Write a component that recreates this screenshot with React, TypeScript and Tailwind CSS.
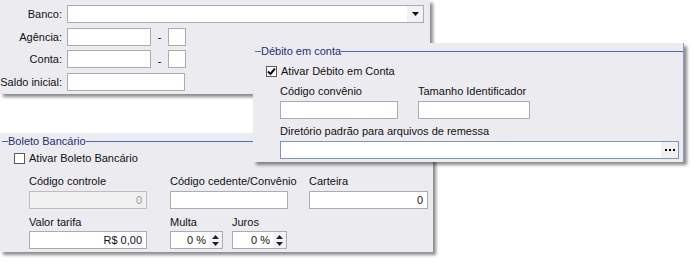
import React from 'react'

const font = "font-['Liberation_Sans',Arial,sans-serif]"

const Field = ({ className = '', value = '', disabled = false }: { className?: string; value?: string; disabled?: boolean }) => (
  <div
    className={`h-[18px] border flex items-center justify-end pr-[4px] text-[11px] ${
      disabled ? 'bg-[#f0f0f0] border-[#bdbdbd] text-[#9a9a9a]' : 'bg-white border-[#a9acb3] text-[#111]'
    } ${className}`}
  >
    {value}
  </div>
)

const Spin = ({ className = '' }: { className?: string }) => (
  <div className={`h-[18px] border border-[#a9acb3] bg-white flex items-center ${className}`}>
    <span className="flex-1 text-right pr-[3px] text-[11px] text-[#111]">0 %</span>
    <div className="w-[13px] h-full flex flex-col items-center justify-center gap-[3px] bg-[#f3f3f5]">
      <svg width="7" height="4" viewBox="0 0 7 4"><path d="M3.5 0L7 4H0z" fill="#222" /></svg>
      <svg width="7" height="4" viewBox="0 0 7 4"><path d="M0 0h7L3.5 4z" fill="#222" /></svg>
    </div>
  </div>
)

const Check = ({ checked }: { checked?: boolean }) => (
  <span className="w-[11px] h-[11px] border border-[#5a5a5a] bg-white flex items-center justify-center shrink-0">
    {checked && (
      <svg width="9" height="9" viewBox="0 0 9 9">
        <path d="M1 4.5L3.5 7L8 1.5" stroke="#111" strokeWidth="2" fill="none" />
      </svg>
    )}
  </span>
)

const Legend = ({ title }: { title: string }) => (
  <div className="flex items-center h-[14px] pl-[2px]">
    <div className="w-[6px] h-px bg-[#4d68ae]" />
    <span className="text-[11px] text-[#1d2f78] leading-none">{title}</span>
    <div className="flex-1 h-px bg-[#4d68ae]" />
  </div>
)

const Row = ({ label, children }: { label: string; children: React.ReactNode }) => (
  <div className="flex items-center h-[18px]">
    <span className="w-[62px] text-right text-[11px] text-[#111] whitespace-nowrap">{label}</span>
    <div className="ml-[5px] flex items-center">{children}</div>
  </div>
)

const App = () => {
  return (
    <div className={`relative w-[693px] h-[262px] bg-white overflow-hidden ${font}`}>
      {/* janela conta */}
      <div className="absolute left-0 top-0 w-[430px] h-[94px] bg-[#ecebf0] shadow-[3px_3px_3px_rgba(0,0,0,0.45)] pt-[5px] flex flex-col">
        <Row label="Banco:">
          <div className="w-[357px] h-[18px] border border-[#a9acb3] bg-white flex justify-end">
            <div className="w-[16px] h-full bg-[#f2f2f4] flex items-center justify-center">
              <svg width="7" height="4" viewBox="0 0 7 4"><path d="M0 0h7L3.5 4z" fill="#111" /></svg>
            </div>
          </div>
        </Row>
        <div className="mt-[5px]">
          <Row label="Agência:">
            <Field className="w-[84px]" />
            <span className="w-[17px] text-center text-[11px]">-</span>
            <Field className="w-[18px]" />
          </Row>
        </div>
        <div className="mt-[4px]">
          <Row label="Conta:">
            <Field className="w-[84px]" />
            <span className="w-[17px] text-center text-[11px] mt-[5px]">-</span>
            <Field className="w-[18px]" />
          </Row>
        </div>
        <div className="mt-[5px]">
          <Row label="Saldo inicial:">
            <Field className="w-[118px]" />
          </Row>
        </div>
      </div>

      {/* boleto bancario */}
      <div className="absolute left-0 top-[133px] w-[433px] h-[119px] bg-[#ecebf0] shadow-[3px_3px_3px_rgba(0,0,0,0.45)] pt-[1px]">
        <Legend title="Boleto Bancário" />
        <div className="flex items-center gap-[4px] pl-[14px] mt-[4px] h-[12px]">
          <Check />
          <span className="text-[11px] text-[#111]">Ativar Boleto Bancário</span>
        </div>
        <div className="flex pl-[29px] mt-[10px] text-[11px] text-[#111] h-[14px] items-center">
          <span className="w-[141px]">Código controle</span>
          <span className="w-[139px]">Código cedente/Convênio</span>
          <span>Carteira</span>
        </div>
        <div className="flex pl-[29px] mt-[3px]">
          <Field className="w-[118px]" value="0" disabled />
          <Field className="w-[118px] ml-[23px]" />
          <Field className="w-[119px] ml-[21px]" value="0" />
        </div>
        <div className="flex pl-[29px] mt-[6px] text-[11px] text-[#111] h-[14px] items-center">
          <span className="w-[141px]">Valor tarifa</span>
          <span className="w-[62px]">Multa</span>
          <span>Juros</span>
        </div>
        <div className="flex pl-[29px] mt-[2px]">
          <Field className="w-[118px]" value="R$ 0,00" />
          <Spin className="w-[53px] ml-[23px]" />
          <Spin className="w-[55px] ml-[9px]" />
        </div>
      </div>

      {/* debito em conta */}
      <div className="absolute left-[253px] top-[43px] w-[431px] h-[119px] bg-[#ecebf0] border-r border-[#8c9bc4] shadow-[3px_3px_3px_rgba(0,0,0,0.45)] pt-[1px]">
        <Legend title="Débito em conta" />
        <div className="flex items-center gap-[4px] pl-[13px] mt-[7px] h-[12px]">
          <Check checked />
          <span className="text-[11px] text-[#111]">Ativar Débito em Conta</span>
        </div>
        <div className="flex pl-[27px] mt-[7px] text-[11px] text-[#111] h-[14px] items-center">
          <span className="w-[138px]">Código convênio</span>
          <span>Tamanho Identificador</span>
        </div>
        <div className="flex pl-[27px] mt-[3px]">
          <Field className="w-[118px]" />
          <Field className="w-[112px] ml-[20px]" />
        </div>
        <div className="flex pl-[27px] mt-[5px] text-[11px] text-[#111] h-[14px] items-center">
          <span>Diretório padrão para arquivos de remessa</span>
        </div>
        <div className="flex pl-[27px] mt-[3px]">
          <div className="w-[399px] h-[18px] border border-[#7f93bf] bg-white flex justify-end">
            <div className="w-[17px] h-full bg-[#f0f0f2] flex items-center justify-center gap-[2px]">
              <span className="w-[2px] h-[2px] bg-black" />
              <span className="w-[2px] h-[2px] bg-black" />
              <span className="w-[2px] h-[2px] bg-black" />
            </div>
          </div>
        </div>
      </div>
    </div>
  )
}

export default App
